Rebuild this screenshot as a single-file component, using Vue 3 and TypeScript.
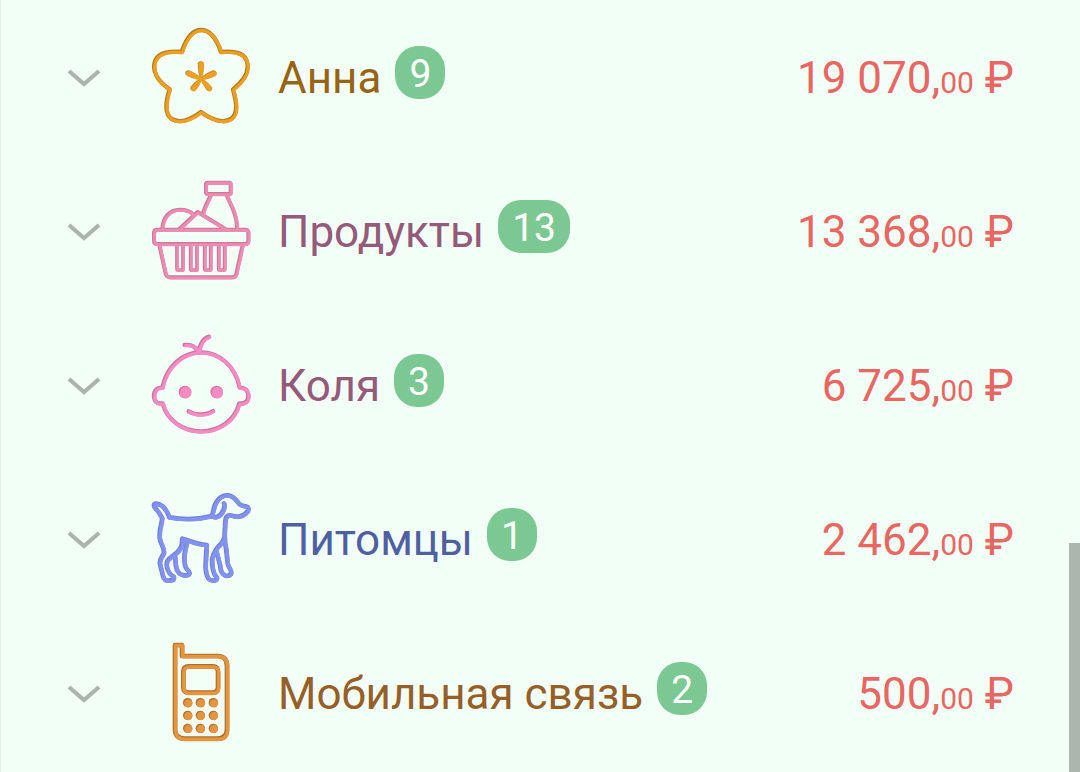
<script setup lang="ts">
import { ref } from 'vue'

interface Dot {
  x: number
  y: number
  r: number
}

interface Glyph {
  viewBox: string
  base: string
  shade: string
  width: number
  lines: string[]
  thin?: string[]
  petals?: string[]
  dots?: Dot[]
}

interface Category {
  id: string
  name: string
  color: string
  count: number
  whole: string
  cents: string
  glyph: Glyph
}

const categories: Category[] = [
  {
    id: 'anna',
    name: 'Анна',
    color: '#996314',
    count: 9,
    whole: '19 070',
    cents: '00',
    glyph: {
      viewBox: '0 -6 360 360',
      base: '#e9a024',
      shade: '#b57d1c',
      width: 13,
      lines: [
        'M125 96C137 60 153 30 183 30C213 30 231 60 243 96C282 92 311 98 320 122C331 154 311 183 279 208C290 247 295 279 274 296C249 313 211 297 183 276C155 297 121 312 95 297C74 281 76 247 89 208C57 187 34 156 45 124C55 97 86 92 125 96Z',
      ],
      petals: [
        'M174 131C174 121 190 121 190 131C190 147 188 160 184 174H180C176 160 174 147 174 131Z',
        'M218 152C228 149 233 162 224 166C211 173 199 176 185 178L183 174C194 163 205 156 218 152Z',
        'M213 200C219 208 207 217 200 209C192 199 187 190 182 178L186 176C197 182 206 190 213 200Z',
        'M153 200C147 208 159 217 166 209C174 199 178 190 184 178L180 176C169 182 160 190 153 200Z',
        'M147 152C137 149 132 162 141 166C154 173 167 176 180 178L182 174C171 163 160 156 147 152Z',
      ],
    },
  },
  {
    id: 'food',
    name: 'Продукты',
    color: '#95597a',
    count: 13,
    whole: '13 368',
    cents: '00',
    glyph: {
      viewBox: '0 6 360 360',
      base: '#ec8cb3',
      shade: '#c97896',
      width: 12,
      lines: [
        'M203 38H267Q272 38 272 43V67Q272 72 267 72H203Q198 72 198 67V43Q198 38 203 38Z',
        'M212 76L202 97C195 111 191 121 189 132M260 76L277 113C287 135 291 157 291 177',
        'M67 177C68 143 88 119 119 119C136 119 149 122 158 132M118 177L173 126L256 177',
        'M52 179H315Q325 179 325 189V212Q325 222 315 222H52Q42 222 42 212V189Q42 179 52 179Z',
        'M58 225L77 311Q80 322 91 322H275Q286 322 289 311L308 225',
      ],
      thin: [
        'M111 225V297Q111 300 114 300H126Q129 300 129 297V225',
        'M152 225V297Q152 300 155 300H168Q171 300 171 297V225',
        'M194 225V297Q194 300 197 300H209Q212 300 212 297V225',
        'M236 225V297Q236 300 239 300H251Q254 300 254 297V225',
      ],
    },
  },
  {
    id: 'kolya',
    name: 'Коля',
    color: '#95597a',
    count: 3,
    whole: '6 725',
    cents: '00',
    glyph: {
      viewBox: '0 3 360 360',
      base: '#f68ac2',
      shade: '#c6769d',
      width: 13,
      lines: [
        'M183 82C129 82 80 122 67 188C52 186 42 197 42 213C42 229 52 238 68 235C82 288 130 319 183 319C236 319 284 288 298 235C314 238 325 229 325 213C325 197 315 187 299 188C286 122 237 82 183 82Z',
        'M178 81C178 57 191 40 207 35M172 77C165 64 151 58 134 60',
        'M146 259C167 271 198 272 219 258',
      ],
      dots: [
        { x: 135, y: 201, r: 19 },
        { x: 230, y: 201, r: 19 },
      ],
    },
  },
  {
    id: 'pets',
    name: 'Питомцы',
    color: '#4f5fa1',
    count: 1,
    whole: '2 462',
    cents: '00',
    glyph: {
      viewBox: '0 0 360 360',
      base: '#8193ee',
      shade: '#7182d6',
      width: 14,
      lines: [
        'M88 112C130 119 174 119 215 108C221 96 220 80 229 66C240 48 253 45 265 46C283 48 287 60 297 71C303 78 313 78 321 80C328 83 325 93 319 98C309 109 292 113 272 106C254 104 256 124 255 141C253 164 253 184 258 205L263 250C264 258 268 262 271 269C277 280 271 289 256 287C244 282 241 270 240 255L229 213M88 112C80 88 70 73 48 71C39 72 41 80 47 86C56 95 60 102 66 113C68 128 56 145 59 174C61 193 76 206 71 221C65 231 57 239 60 253L68 285C71 299 77 304 91 301C103 301 105 290 96 287C87 281 77 263 81 245C84 232 110 225 121 205C128 194 126 184 127 176C150 181 168 194 200 195L197 248C196 266 196 279 203 291C207 302 220 303 227 300C234 296 230 289 225 286C217 270 216 255 216 239C220 216 231 201 246 188L253 173',
        'M215 108C222 114 235 112 243 102C251 91 256 80 252 70',
        'M106 233C106 247 107 259 111 270C117 284 131 288 143 285C151 281 149 275 140 267C132 255 132 236 134 219L141 185',
      ],
    },
  },
  {
    id: 'mobile',
    name: 'Мобильная связь',
    color: '#965f28',
    count: 2,
    whole: '500',
    cents: '00',
    glyph: {
      viewBox: '0 6 360 360',
      base: '#e3953f',
      shade: '#b06e25',
      width: 14,
      lines: [
        'M105 39H126V72H232Q261 72 261 101V291Q261 320 232 320H134Q105 320 105 291Z',
        'M146 103H218Q234 103 234 119V166Q234 182 218 182H146Q130 182 130 166V119Q130 103 146 103Z',
      ],
      dots: [212, 250, 289].flatMap((y) => [143, 181, 220].map((x) => ({ x, y, r: 14 }))),
    },
  },
]

const layers = [
  { tone: 'shade', inset: 0, shift: 0 },
  { tone: 'base', inset: 3, shift: 2 },
] as const

const expanded = ref<string | null>(null)

function toggle(id: string) {
  expanded.value = expanded.value === id ? null : id
}
</script>

<template>
  <main class="screen">
    <ul class="list">
      <li v-for="c in categories" :key="c.id" class="row">
        <button
          class="toggle"
          type="button"
          :aria-label="c.name"
          :aria-expanded="expanded === c.id"
          @click="toggle(c.id)"
        >
          <svg class="chevron" viewBox="0 0 36 20" aria-hidden="true">
            <path d="M3 3L18 16L33 3" />
          </svg>
        </button>
        <svg class="glyph" :viewBox="c.glyph.viewBox" aria-hidden="true">
          <g
            v-for="layer in layers"
            :key="layer.tone"
            :stroke="c.glyph[layer.tone]"
            :transform="`translate(${layer.shift} ${layer.shift})`"
          >
            <path
              v-for="d in c.glyph.lines"
              :key="d"
              :d="d"
              :stroke-width="c.glyph.width - layer.inset"
            />
            <path v-for="d in c.glyph.thin" :key="d" :d="d" :stroke-width="11 - layer.inset" />
            <path
              v-for="d in c.glyph.petals"
              :key="d"
              :d="d"
              :fill="c.glyph[layer.tone]"
              stroke-width="1"
            />
            <circle
              v-for="dot in c.glyph.dots"
              :key="`${dot.x}-${dot.y}`"
              :cx="dot.x"
              :cy="dot.y"
              :r="dot.r - layer.inset / 2"
              :fill="c.glyph[layer.tone]"
              stroke="none"
            />
          </g>
        </svg>
        <span class="name" :style="{ color: c.color }">{{ c.name }}</span>
        <span class="badge">{{ c.count }}</span>
        <span class="amount">{{ c.whole }},<span class="cents">{{ c.cents }}</span> ₽</span>
      </li>
    </ul>
    <div class="scroll-thumb"></div>
  </main>
</template>

<style>
body {
  margin: 0;
  background: #f1fff6;
}
</style>

<style scoped>
.screen {
  position: relative;
  box-sizing: border-box;
  min-height: 100vh;
  padding-top: 1px;
  border-left: 1px solid #e2efe7;
  background: #f1fff6;
  font-family: Roboto, 'Noto Sans', sans-serif;
}

.list {
  margin: 0;
  padding: 0;
  list-style: none;
}

.row {
  display: flex;
  align-items: center;
  height: 154px;
  padding: 0 66px 0 57px;
}

.toggle {
  display: flex;
  align-items: center;
  justify-content: center;
  width: 52px;
  height: 52px;
  padding: 0;
  border: 0;
  background: none;
  cursor: pointer;
}

.chevron {
  width: 36px;
  height: 20px;
  fill: none;
  stroke: #a9b4ac;
  stroke-width: 4;
}

.glyph {
  flex: none;
  width: 120px;
  height: 120px;
  margin: 0 18px 0 30px;
  fill: none;
  stroke-linecap: round;
  stroke-linejoin: round;
  filter: drop-shadow(1px 1px 1px #ffffff);
}

.name {
  font-size: 44px;
  line-height: 52px;
  white-space: nowrap;
}

.badge {
  box-sizing: border-box;
  height: 53px;
  margin: 0 0 11px 14px;
  padding: 0 14px;
  border-radius: 23px;
  background: #7bc892;
  color: #ffffff;
  font-size: 39px;
  line-height: 57px;
}

.amount {
  margin-left: auto;
  color: #e86763;
  font-size: 44px;
  line-height: 52px;
  white-space: nowrap;
}

.cents {
  font-size: 30px;
  line-height: 30px;
}

.scroll-thumb {
  position: absolute;
  right: 0;
  bottom: 0;
  width: 11px;
  height: 229px;
  background: #adb5af;
}
</style>
